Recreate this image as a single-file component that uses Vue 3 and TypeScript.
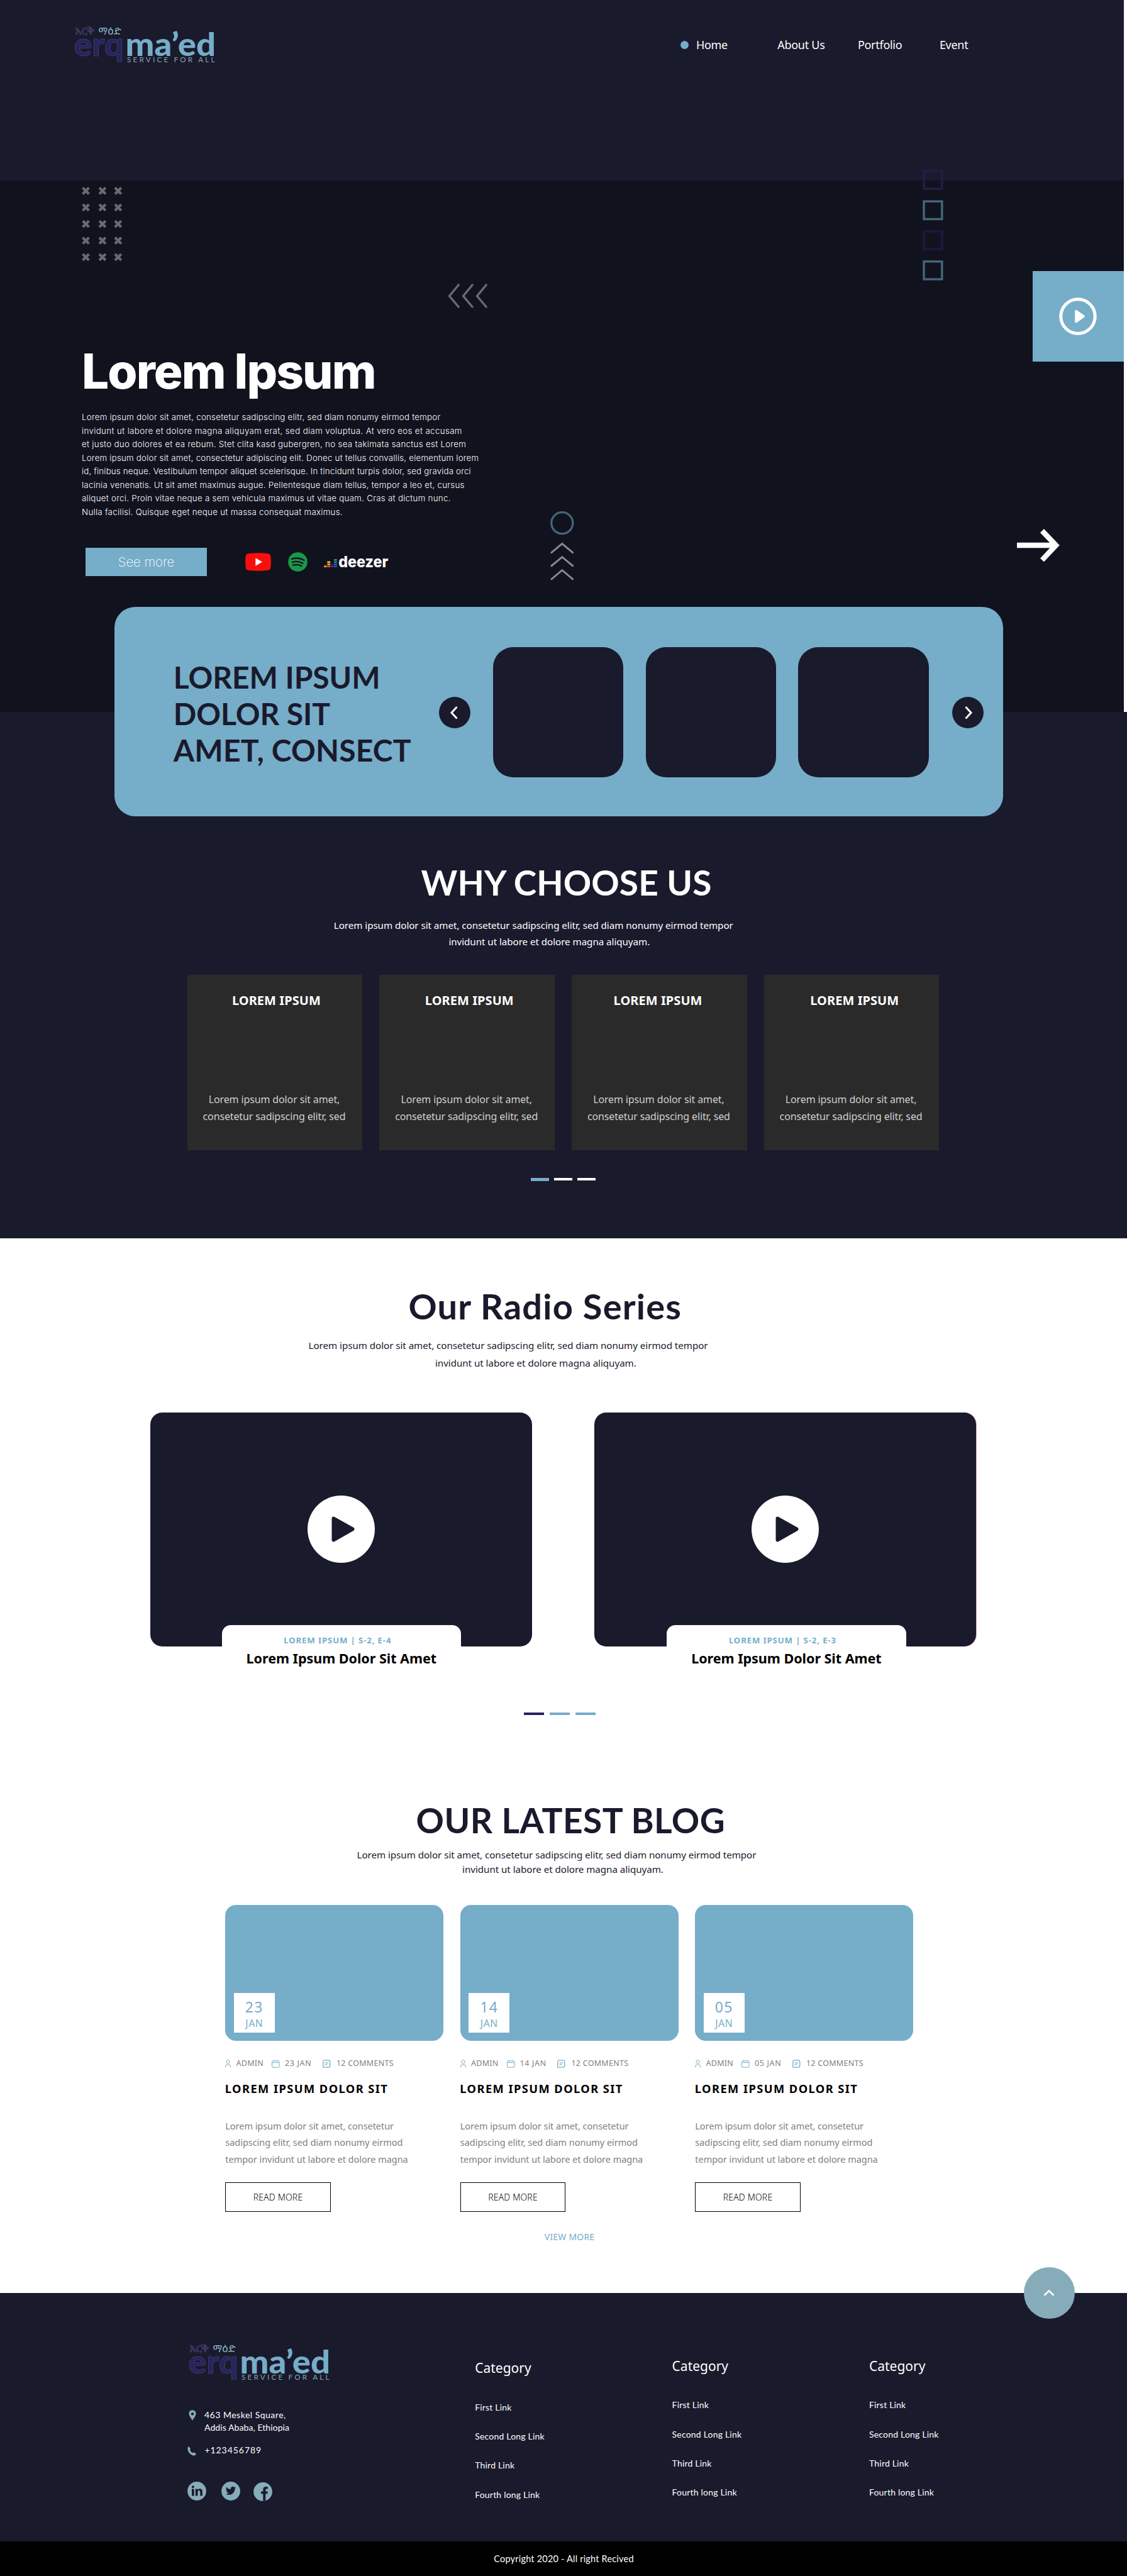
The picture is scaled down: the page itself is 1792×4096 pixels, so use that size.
<script setup lang="ts">
import { defineComponent, h } from 'vue'

const navy = '#1a1a2d'

/* Brand mark, shared by the header and the footer */
const BrandLogo = defineComponent({
  name: 'BrandLogo',
  setup: () => () =>
    h('svg', { width: 240, height: 70, viewBox: '110 35 240 70', style: 'display:block' }, [
      h('g', { 'font-family': '"Noto Sans Ethiopic","Abyssinica SIL",Lato,sans-serif', 'font-size': 15 }, [
        h('text', { x: 119, y: 55, fill: '#2b2960', stroke: '#55547a', 'stroke-width': 0.4, textLength: 31.5, lengthAdjust: 'spacingAndGlyphs' }, 'እርቅ'),
        h('text', { x: 156.6, y: 55, fill: '#8fbccb', textLength: 36, lengthAdjust: 'spacingAndGlyphs' }, 'ማዕድ'),
      ]),
      h('g', { 'font-family': 'Lato, sans-serif', 'font-weight': 900, 'font-size': 52 }, [
        h('text', { x: 117.5, y: 89.2, fill: '#26235e', stroke: '#55547a', 'stroke-width': 0.5, textLength: 79, lengthAdjust: 'spacingAndGlyphs' }, 'erq'),
        h('text', { x: 199.5, y: 89.2, fill: '#76adc9', textLength: 143.5, lengthAdjust: 'spacingAndGlyphs' }, 'ma’ed'),
      ]),
      h('text', { x: 202, y: 99.3, fill: '#87a5b0', 'font-family': 'Lato, sans-serif', 'font-size': 11.6, textLength: 139.5, lengthAdjust: 'spacing' }, 'SERVICE FOR ALL'),
    ]),
})

const navLinks = ['Home', 'About Us', 'Portfolio', 'Event']

const heroLines = [
  { text: 'Lorem ipsum dolor sit amet, consetetur sadipscing elitr, sed diam nonumy eirmod tempor', tracking: 0.248 },
  { text: 'invidunt ut labore et dolore magna aliquyam erat, sed diam voluptua. At vero eos et accusam', tracking: 0.377 },
  { text: 'et justo duo dolores et ea rebum. Stet clita kasd gubergren, no sea takimata sanctus est Lorem', tracking: 0.306 },
  { text: 'Lorem ipsum dolor sit amet, consectetur adipiscing elit. Donec ut tellus convallis, elementum lorem', tracking: 0.227 },
  { text: 'id, finibus neque. Vestibulum tempor aliquet scelerisque. In tincidunt turpis dolor, sed gravida orci', tracking: 0.18 },
  { text: 'lacinia venenatis. Ut sit amet maximus augue. Pellentesque diam tellus, tempor a leo et, cursus', tracking: 0.264 },
  { text: 'aliquet orci. Proin vitae neque a sem vehicula maximus ut vitae quam. Cras at dictum nunc.', tracking: 0.287 },
  { text: 'Nulla facilisi. Quisque eget neque ut massa consequat maximus.', tracking: 0.288 },
]

const squares = [
  { y: 2, color: '#211e46' },
  { y: 50.2, color: '#456479' },
  { y: 98, color: '#1c1a3e' },
  { y: 145.8, color: '#456479' },
]

const crossCols = [6.5, 32.9, 57.8]
const crossRows = [0, 1, 2, 3, 4].map((i) => 6.5 + i * 26.35)

/* Card titles sit slightly off the card's axis */
const reasons = [2.4, 3.6, -2.3, 4.7]

const episodes = [
  { label: 'LOREM IPSUM | S-2, E-4', title: 'Lorem Ipsum Dolor Sit Amet' },
  { label: 'LOREM IPSUM | S-2, E-3', title: 'Lorem Ipsum Dolor Sit Amet' },
]

const posts = [{ day: '23' }, { day: '14' }, { day: '05' }]

const categoryLinks = ['First Link', 'Second Long Link', 'Third Link', 'Fourth long Link']
</script>

<template>
  <div class="page">
    <div class="top">
      <header class="header">
        <div class="brand"><BrandLogo /></div>
        <nav class="nav">
          <a v-for="(l, i) in navLinks" :key="l" class="nav-link">
            <span v-if="i === 0" class="dot"></span>{{ l }}
          </a>
        </nav>
      </header>

      <section class="hero">
        <svg class="deco crosses" width="65" height="120" viewBox="0 0 65 120">
          <template v-for="y in crossRows" :key="y">
            <path v-for="x in crossCols" :key="x" :d="`M${x - 4.9} ${y - 4.9}l9.8 9.8m0-9.8l-9.8 9.8`" stroke="#69696f" stroke-width="4.200" fill="none" />
          </template>
        </svg>
        <svg class="deco lefts" width="64" height="40" viewBox="0 0 64 40">
          <path d="M18 1L2.500 19.700L18 38M40 1L24.500 19.700L40 38M62 1L46.500 19.700L62 38" fill="none" stroke="#69696f" stroke-width="3.400" />
        </svg>
        <svg class="deco squares" width="33" height="178" viewBox="0 0 33 178">
          <rect v-for="s in squares" :key="s.y" x="2" :y="s.y" width="28.800" height="28.200" fill="none" :stroke="s.color" stroke-width="3.500" />
        </svg>
        <div class="side-play">
          <svg width="60" height="60" viewBox="0 0 60 60">
            <circle cx="30" cy="30" r="27.200" fill="none" stroke="#fff" stroke-width="5" />
            <path d="M27 21.500L39 30L27 38.500Z" fill="#fff" stroke="#fff" stroke-width="3.600" stroke-linejoin="round" />
          </svg>
        </div>
        <svg class="deco ups" width="38" height="112" viewBox="0 0 38 112">
          <circle cx="18.800" cy="18.700" r="17" fill="none" stroke="#456479" stroke-width="3.300" />
          <path d="M1 66.400L18.800 51.500L36.600 66.400M1 87.500L18.800 72.600L36.600 87.500M1 108.600L18.800 93.700L36.600 108.600" fill="none" stroke="#88888d" stroke-width="3" />
        </svg>
        <svg class="deco next" width="68" height="53" viewBox="0 0 68 53">
          <path d="M0 26H62M40 3L62 26L40 49.500" fill="none" stroke="#fff" stroke-width="8.400" />
        </svg>

        <h1 class="hero-title">Lorem Ipsum</h1>
        <p class="hero-text">
          <span v-for="l in heroLines" :key="l.text" :style="{ letterSpacing: l.tracking + 'px' }">{{ l.text }}</span>
        </p>
        <div class="hero-actions">
          <a class="see-more">See more</a>
          <svg class="yt" width="41" height="29" viewBox="0 0 41 29">
            <path d="M5 1.200Q20.500-.8 36 1.200Q39.800 1.800 40.300 5.500Q41.500 14.500 40.300 23.500Q39.800 27.200 36 27.800Q20.500 29.800 5 27.800Q1.200 27.200.7 23.500Q-.5 14.500.7 5.500Q1.200 1.800 5 1.200Z" fill="#fc0d0d" />
            <path d="M16.300 8.300L27 14.500L16.300 20.700Z" fill="#fff" />
          </svg>
          <svg class="sp" width="31" height="31" viewBox="0 0 31 31">
            <circle cx="15.500" cy="15.500" r="15.300" fill="#1a984a" />
            <path d="M5.800 10.800Q16 7.500 25.500 12.700M7 15.900Q15.500 13.300 23.500 17.600M8 20.700Q15.500 18.600 21.500 22" fill="none" stroke="#11131f" stroke-width="2.300" stroke-linecap="round" />
          </svg>
          <svg class="dz" width="104" height="31" viewBox="0 0 104 31">
            <rect x="0" y="21.400" width="4.800" height="2.500" fill="#ff9a1a" />
            <rect x="5.400" y="21.400" width="4.800" height="2.500" fill="#e8485c" />
            <rect x="10.700" y="21.400" width="4.800" height="2.500" fill="#7d1d7a" />
            <rect x="16" y="21.400" width="4.800" height="2.500" fill="#2f55a4" />
            <rect x="5.400" y="18" width="4.800" height="2.500" fill="#f7b715" />
            <rect x="10.700" y="18" width="4.800" height="2.500" fill="#2a1c70" />
            <rect x="16" y="18" width="4.800" height="2.500" fill="#2f6a9b" />
            <rect x="5.400" y="14.500" width="4.800" height="2.500" fill="#f9d423" />
            <rect x="16" y="14.500" width="4.800" height="2.500" fill="#317d8a" />
            <rect x="16" y="11" width="4.800" height="2.500" fill="#2f9a58" />
            <text x="23.200" y="23.900" fill="#fff" font-family="Inter, sans-serif" font-weight="800" font-size="25" textLength="79" lengthAdjust="spacingAndGlyphs">deezer</text>
          </svg>
        </div>
      </section>
    </div>

    <section class="why">
      <div class="carousel">
        <h2 class="carousel-title"><span>LOREM IPSUM</span><span>DOLOR SIT</span><span class="tight">AMET, CONSECT</span></h2>
        <div class="round prev">
          <svg width="50" height="50" viewBox="0 0 50 50"><path d="M28.500 16L20 25.300L28.500 34.500" fill="none" stroke="#fff" stroke-width="3" /></svg>
        </div>
        <div class="tiles"><div v-for="n in 3" :key="n" class="tile"></div></div>
        <div class="round">
          <svg width="50" height="50" viewBox="0 0 50 50"><path d="M21.500 16L30 25.300L21.500 34.500" fill="none" stroke="#fff" stroke-width="3" /></svg>
        </div>
      </div>

      <h2 class="heading">WHY CHOOSE US</h2>
      <p class="lead">
        <span>Lorem ipsum dolor sit amet, consetetur sadipscing elitr, sed diam nonumy eirmod tempor</span>
        <span class="second">invidunt ut labore et dolore magna aliquyam.</span>
      </p>
      <div class="reasons">
        <article v-for="(shift, i) in reasons" :key="i" class="reason">
          <h3 :style="{ marginLeft: shift * 2 + 'px' }">LOREM IPSUM</h3>
          <p>Lorem ipsum dolor sit amet,<br />consetetur sadipscing elitr, sed</p>
        </article>
      </div>
      <div class="pager"><i class="on"></i><i></i><i></i></div>
    </section>

    <section class="radio">
      <h2 class="heading">Our Radio Series</h2>
      <p class="lead">
        <span>Lorem ipsum dolor sit amet, consetetur sadipscing elitr, sed diam nonumy eirmod tempor</span>
        <span class="second">invidunt ut labore et dolore magna aliquyam.</span>
      </p>
      <div class="episodes">
        <article v-for="(e, i) in episodes" :key="e.label" class="episode">
          <div class="media" :class="{ edged: i === 1 }">
            <svg width="107" height="107" viewBox="0 0 107 107">
              <circle cx="53.500" cy="53.500" r="53.500" fill="#fff" />
              <path d="M41.500 36.500L71.500 53.300L41.500 70.500Z" :fill="navy" :stroke="navy" stroke-width="6" stroke-linejoin="round" />
            </svg>
          </div>
          <div class="caption">
            <span class="label">{{ e.label }}</span>
            <h3>{{ e.title }}</h3>
          </div>
        </article>
      </div>
      <div class="pager"><i class="on"></i><i></i><i></i></div>
    </section>

    <section class="blog">
      <h2 class="heading">OUR LATEST BLOG</h2>
      <p class="lead">
        <span>Lorem ipsum dolor sit amet, consetetur sadipscing elitr, sed diam nonumy eirmod tempor</span>
        <span class="second">invidunt ut labore et dolore magna aliquyam.</span>
      </p>
      <div class="posts">
        <article v-for="p in posts" :key="p.day" class="post">
          <div class="cover">
            <div class="date"><b>{{ p.day }}</b><span>JAN</span></div>
          </div>
          <div class="meta">
            <svg width="9" height="13" viewBox="0 0 9 13" fill="none" stroke="#76adc9" stroke-width="1">
              <ellipse cx="4.500" cy="3.300" rx="2.600" ry="2.700" />
              <path d="M.6 12.600V10.500Q.6 8 3 8H6Q8.400 8 8.400 10.500V12.600" />
            </svg>
            <span>ADMIN</span>
            <svg width="13" height="13" viewBox="0 0 13 13" fill="none" stroke="#76adc9" stroke-width="1">
              <rect x=".6" y="2" width="11.400" height="10.200" rx="1.400" />
              <path d="M.6 4.600H12M3.600.2V2M9 .2V2" />
            </svg>
            <span class="wide">{{ p.day }} JAN</span>
            <svg width="13" height="13" viewBox="0 0 13 13" fill="none" stroke="#76adc9" stroke-width="1.300">
              <path d="M.8 12.100V3.200Q.8.800 3.200.8H9.400Q11.800.8 11.800 3.200V9.200Q11.800 12.100 8.900 12.100Z" />
              <path d="M3.500 5.100H9.300M3.500 7.900H7.400" />
            </svg>
            <span>12 COMMENTS</span>
          </div>
          <h3>LOREM IPSUM DOLOR SIT</h3>
          <p>Lorem ipsum dolor sit amet, consetetur<br />sadipscing elitr, sed diam nonumy eirmod<br />tempor invidunt ut labore et dolore magna</p>
          <a class="read">READ MORE</a>
        </article>
      </div>
      <a class="view-more">VIEW MORE</a>
    </section>

    <footer class="footer">
      <div class="to-top">
        <svg width="20" height="14" viewBox="0 0 20 14"><path d="M3.200 10L10 3.600L16.800 10" fill="none" stroke="#fff" stroke-width="2.600" stroke-linecap="round" /></svg>
      </div>
      <div class="contact">
        <BrandLogo />
        <div class="row address">
          <svg width="12" height="17" viewBox="0 0 12 17"><path fill-rule="evenodd" d="M6 .3C2.700.3.5 2.700.5 5.700C.5 9.500 4 13.200 6 16.700C8 13.200 11.500 9.500 11.500 5.700C11.500 2.700 9.300.3 6 .3ZM6 3.900A2.100 2.300 0 1 1 6 8.500A2.100 2.300 0 1 1 6 3.900Z" fill="#87acb9" /></svg>
          <p><span class="street">463 Meskel Square,</span><br />Addis Ababa, Ethiopia</p>
        </div>
        <div class="row phone">
          <svg width="14" height="15" viewBox="0 0 14 15"><path d="M.3 3.200C.3 1.500 1.300.4 2.500.3L4.700 3.200C4.900 3.700 4.700 4.300 4.200 5C4.300 7 6 9.300 8 10.300C8.700 9.800 9.500 9.400 10.200 9.400L13.600 11.300C13.900 13 12.300 14.500 10.400 14.500C5.500 14.500.3 8.500.3 3.200Z" fill="#87acb9" /></svg>
          <p>+123456789</p>
        </div>
        <div class="social">
          <svg width="30" height="30" viewBox="0 0 30 30">
            <circle cx="15" cy="15" r="14.900" fill="#87acb9" />
            <g :fill="navy">
              <circle cx="8.800" cy="8.200" r="2" />
              <rect x="7" y="11.500" width="3.600" height="11" />
              <path d="M12.800 11.500H16.200V13C17.200 11.700 18.300 11.200 19.800 11.200C22.700 11.200 23.800 13 23.800 16V22.500H20.300V16.700C20.300 15 19.800 14 18.500 14C17 14 16.400 15 16.400 16.700V22.500H12.800Z" />
            </g>
          </svg>
          <svg class="tw" width="30" height="30" viewBox="0 0 30 30">
            <circle cx="15" cy="15" r="14.900" fill="#87acb9" />
            <path transform="translate(6.800 6.300) scale(.68)" :fill="navy" d="M23.950 4.570a10 10 0 0 1-2.820.77 4.960 4.960 0 0 0 2.160-2.720c-.95.55-2 .950-3.130 1.180a4.920 4.920 0 0 0-8.380 4.480C7.690 8.100 4.070 6.130 1.640 3.160a4.820 4.820 0 0 0-.67 2.480c0 1.710.87 3.210 2.190 4.100a4.900 4.900 0 0 1-2.230-.62v.06a4.920 4.920 0 0 0 3.950 4.830 5 5 0 0 1-2.210.08 4.940 4.940 0 0 0 4.600 3.420A9.870 9.870 0 0 1 0 19.540a13.990 13.990 0 0 0 7.550 2.210c9.050 0 14-7.500 14-13.980 0-.21 0-.42-.02-.63a9.940 9.940 0 0 0 2.460-2.550z" />
          </svg>
          <svg class="fb" width="30" height="30" viewBox="0 0 30 30">
            <circle cx="15" cy="15" r="14.900" fill="#87acb9" />
            <path d="M15.300 29.900V18.300H12V14.400H15.300V11.500C15.300 8.400 17 6.900 19.800 6.900H22.800V10.600H20.800C19.600 10.600 19.300 11.200 19.300 12.300V14.400H22.700L22.400 18.300H19.300V29.300Z" :fill="navy" />
          </svg>
        </div>
      </div>
      <div v-for="n in 3" :key="n" class="links" :class="'links-' + n">
        <h4>Category</h4>
        <ul>
          <li v-for="l in categoryLinks" :key="l">{{ l }}</li>
        </ul>
      </div>
    </footer>
    <div class="copyright">Copyright 2020 - All right Recived</div>
  </div>
</template>

<style>
body { margin: 0; background: #fff; }
</style>

<style scoped>
.page { width: 1792px; height: 4096px; overflow: hidden; font-family: "Noto Sans", "Open Sans", sans-serif; color: #fff; }
h1, h2, h3, h4, p, ul { margin: 0; padding: 0; }
ul { list-style: none; }
svg { display: block; flex: none; }

.top { width: 1786.5px; }
.header { display: flex; height: 286.5px; background: #1a1a2d; }
.brand { flex: none; box-sizing: border-box; width: 1082px; padding: 35px 0 0 110px; }
.nav { display: grid; grid-template-columns: 154.2px 127.7px 130px auto; align-content: start; padding-top: 59.3px; font-size: 18px; line-height: 24px; letter-spacing: -0.28px; }
.nav-link { display: flex; align-items: center; }
.dot { width: 13.3px; height: 13.3px; border-radius: 50%; background: #76adc9; margin-right: 11.6px; }

.hero { position: relative; height: 845px; box-sizing: border-box; padding: 263.7px 0 0 130px; background: #10121e; }
.deco { position: absolute; }
.crosses { left: 130.4px; top: 10.2px; }
.lefts { left: 711.5px; top: 164.4px; }
.squares { left: 1467.3px; top: -16.1px; }
.side-play { position: absolute; left: 1642px; top: 144.3px; width: 144.5px; height: 144.5px; background: #76adc9; display: flex; align-items: center; justify-content: center; }
.ups { left: 874.5px; top: 526.2px; }
.next { left: 1617.3px; top: 554.2px; }
.hero-title { font: 800 76.4px/80px Inter, sans-serif; letter-spacing: -1.9px; }
.hero-text { margin-top: 23.2px; font: 300 13.3px/21.45px Inter, sans-serif; white-space: nowrap; }
.hero-text span { display: block; }
.hero-actions { display: flex; align-items: center; margin: 46.1px 0 0 5.9px; height: 44.5px; }
.see-more { width: 193.3px; height: 44.5px; background: #76adc9; font: 200 20.3px/46px Inter, sans-serif; text-align: center; }
.yt { margin-left: 60.6px; }
.sp { margin-left: 26.9px; }
.dz { margin-left: 26.4px; }

.why { display: flex; flex-direction: column; align-items: flex-start; height: 837.1px; background: #1a1a2d; }
.carousel { position: relative; display: flex; align-items: flex-start; box-sizing: border-box; width: 1412.6px; height: 333.6px; margin: -166.7px 0 0 182.3px; padding-left: 93.5px; border-radius: 33px; background: #76adc9; flex: none; }
.carousel-title { width: 422.7px; margin-top: 83.6px; font: 700 48px/58px Lato, sans-serif; letter-spacing: -0.05px; color: #1a1a2d; white-space: nowrap; }
.carousel-title span { display: block; }
.carousel-title .tight { letter-spacing: 0.2px; }
.round { width: 50px; height: 50px; margin-top: 143.5px; border-radius: 50%; background: #1a1a2d; }
.prev { margin-right: 35.4px; }
.tiles { display: flex; gap: 35.2px; margin: 64.1px 37.4px 0 0; }
.tile { width: 207.5px; height: 207.2px; border-radius: 32px; background: #1a1a2d; }

.heading { font: 700 55px/66px Lato, sans-serif; white-space: nowrap; }
.lead { font-size: 15.2px; letter-spacing: -0.06px; white-space: nowrap; }
.lead span { display: block; }
.why .heading { margin: 71.2px 0 0 669.5px; letter-spacing: 0.1px; }
.why .lead { margin: 23.9px 0 0 530.8px; line-height: 25.3px; }
.why .second { margin-left: 182.6px; }
.reasons { display: flex; gap: 26.9px; margin: 39.5px 0 0 297.6px; }
.reason { width: 278.8px; height: 279.8px; background: #2a2a2a; text-align: center; box-sizing: border-box; padding-top: 27px; }
.reason h3 { font-size: 20px; line-height: 28px; letter-spacing: 0.07px; }
.reason p { margin: 130.6px 2px 0 0; font-size: 16px; line-height: 26.4px; letter-spacing: -0.13px; color: #cfcfcf; }
.pager { display: flex; align-items: center; height: 5px; gap: 8.3px; }
.pager i { width: 29px; height: 3.6px; background: #fff; }
.why .pager { margin: 43.4px 0 0 843.8px; }
.why .pager .on { height: 5px; background: #76adc9; }

.radio { display: flex; flex-direction: column; align-items: flex-start; height: 881.4px; box-sizing: border-box; padding-top: 75px; color: #1a1a2d; }
.radio .heading { margin-left: 649.5px; font-size: 56px; letter-spacing: 1.18px; }
.radio .lead { margin: 16.8px 0 0 490.6px; line-height: 27.7px; }
.radio .second { margin-left: 201.4px; }
.episodes { display: flex; gap: 99.2px; margin: 64px 0 0 238.8px; }
.episode { width: 607.1px; }
.media { display: flex; align-items: center; justify-content: center; height: 372.1px; border-radius: 19px; background: #1a1a2d; }
.edged { box-shadow: 1px 0 0 #f0a9b0; }
.caption { position: relative; width: 380.3px; margin: -33.7px 0 0 113.9px; box-sizing: border-box; padding-top: 15.2px; border-radius: 14px 14px 0 0; background: #fff; text-align: center; }
.label { display: block; margin-right: 12px; font-size: 13.2px; font-weight: 700; line-height: 18px; letter-spacing: 0.87px; color: #76adc9; }
.caption h3 { margin-top: 5.9px; font-size: 21.6px; line-height: 28px; letter-spacing: -0.06px; color: #000; }
.episode + .episode .caption { margin-left: 115.2px; }
.radio .pager { gap: 9.4px; margin: 71.6px 0 0 833px; }
.radio .pager i { width: 31.7px; height: 4.2px; background: #76adc9; }
.radio .pager .on { background: #26235e; }

.blog { display: flex; flex-direction: column; align-items: flex-start; height: 796px; box-sizing: border-box; padding-top: 11.5px; color: #1a1a2d; }
.blog .heading { margin-left: 661.5px; letter-spacing: 0.5px; }
.blog .lead { margin: 10.8px 0 0 567.5px; line-height: 22.5px; }
.blog .second { margin-left: 167.6px; }
.posts { display: flex; gap: 26.5px; margin: 45.9px 0 0 358.3px; }
.post { width: 347px; display: flex; flex-direction: column; align-items: flex-start; }
.cover { position: relative; width: 347px; height: 215.6px; border-radius: 17px; background: #76adc9; }
.date { position: absolute; left: 13.7px; top: 140px; width: 64.8px; height: 62.4px; box-sizing: border-box; padding-top: 9px; background: #fff; color: #76adc9; text-align: center; }
.date b { display: block; font-weight: 400; font-size: 23px; line-height: 26px; letter-spacing: 1.4px; }
.date span { display: block; margin-top: 2.4px; font-size: 15.7px; line-height: 20px; letter-spacing: 0.6px; }
.meta { display: grid; grid-template-columns: 17.2px 56.9px 20.6px 59.9px 22.1px auto; align-items: center; margin-top: 27.3px; font-size: 12.5px; line-height: 18px; letter-spacing: 0.27px; color: #808080; white-space: nowrap; }
.meta .wide { letter-spacing: 0.65px; }
.post h3 { margin-top: 19.4px; margin-left: -0.5px; font-size: 18.3px; line-height: 24px; letter-spacing: 1.43px; color: #000; white-space: nowrap; }
.post p { margin: 33.7px 0 0; font-size: 14.5px; line-height: 26.35px; letter-spacing: -0.04px; color: #808080; white-space: nowrap; }
.read { box-sizing: border-box; width: 167.4px; height: 47.4px; margin-top: 23.8px; border: 1px solid #000; color: #000; font-size: 13.9px; font-weight: 300; line-height: 46px; letter-spacing: 0.2px; text-align: center; }
.view-more { margin: 29.2px 0 0 865.8px; font-size: 14px; line-height: 20px; letter-spacing: 0.2px; color: #76adc9; }

.footer { position: relative; display: flex; align-items: flex-start; height: 395px; background: #1a1a2d; font-family: Lato, sans-serif; font-size: 14px; }
.to-top { position: absolute; left: 1627.5px; top: -41.3px; width: 81.7px; height: 82px; border-radius: 50%; background: #87acb9; display: flex; align-items: center; justify-content: center; }
.contact { width: 755.2px; box-sizing: border-box; padding: 74px 0 0 292px; }
.row { display: flex; }
.row p { white-space: nowrap; }
.address { margin: 40.1px 0 0 7.5px; line-height: 19.6px; }
.address svg { margin: 2.1px 13.5px 0 0; }
.address p { letter-spacing: 0.08px; }
.street { letter-spacing: 0.5px; }
.phone { margin: 17.2px 0 0 6.4px; line-height: 20px; letter-spacing: 0.95px; }
.phone svg { margin: 3.9px 13px 0 0; }
.social { display: flex; margin: 39.5px 0 0 6.3px; }
.tw { margin: 0.5px 0 0 23.6px; }
.fb { margin: 1.5px 0 0 21.5px; }
.links { width: 313.4px; padding-top: 101.9px; }
.links-1 { padding-top: 105.3px; }
.links h4 { font: 400 21px/28px "Noto Sans", sans-serif; }
.links ul { margin-top: 38.4px; }
.links li { height: 46.4px; line-height: 20px; letter-spacing: 0.2px; }

.copyright { height: 55px; box-sizing: border-box; padding: 17.8px 0 0 785.3px; background: #000; font: 14.5px/20px Lato, sans-serif; letter-spacing: 0.2px; }
</style>
